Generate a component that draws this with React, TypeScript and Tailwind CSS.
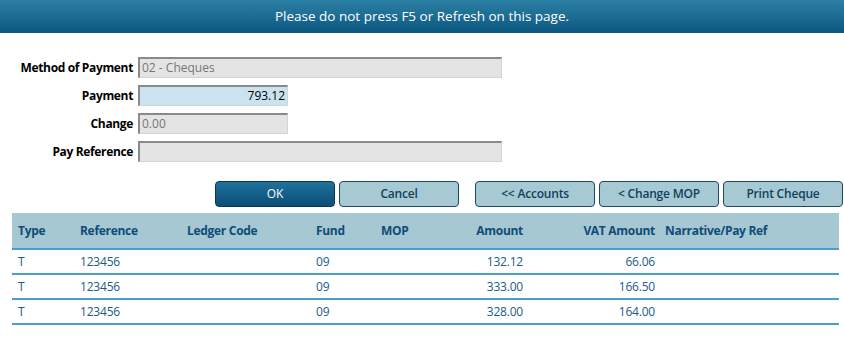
import React from 'react';

interface Line {
  type: string;
  reference: string;
  ledger: string;
  fund: string;
  mop: string;
  amount: string;
  vat: string;
  narrative: string;
}

const lines: Line[] = [
  { type: 'T', reference: '123456', ledger: '', fund: '09', mop: '', amount: '132.12', vat: '66.06', narrative: '' },
  { type: 'T', reference: '123456', ledger: '', fund: '09', mop: '', amount: '333.00', vat: '166.50', narrative: '' },
  { type: 'T', reference: '123456', ledger: '', fund: '09', mop: '', amount: '328.00', vat: '164.00', narrative: '' },
];

const cols = 'grid grid-cols-[62px_107px_129px_65px_65px_89px_132px_1fr]';

const FieldRow: React.FC<{ label: string; children: React.ReactNode }> = ({ label, children }) => (
  <div className="flex items-center h-[21px]">
    <div className="w-[138px] pr-[5px] text-right font-bold text-[12px] tracking-[-0.35px] text-black">{label}</div>
    {children}
  </div>
);

const inputBase =
  'h-[21px] border border-t-[2px] border-l-[2px] border-t-[#8a8a8a] border-l-[#8a8a8a] border-r-[#d4d4d4] border-b-[#d4d4d4] text-[12px] px-[2px] flex items-center';

const Button: React.FC<{ label: string; primary?: boolean }> = ({ label, primary }) => (
  <button
    className={
      primary
        ? 'w-[120px] h-[26px] rounded-[4px] border border-[#0c3550] bg-gradient-to-b from-[#1f719b] to-[#0b4e77] text-white text-[12px]'
        : 'w-[120px] h-[26px] rounded-[4px] border border-[#1d4a60] bg-[#a6c9d3] text-[#123f5c] text-[12px] font-semibold tracking-[-0.2px]'
    }
  >
    {label}
  </button>
);

export default function App() {
  return (
    <div className="w-[844px] h-[344px] bg-white overflow-hidden" style={{ fontFamily: '"Open Sans", "Noto Sans", sans-serif' }}>
      {/* Banner */}
      <div className="h-[33px] bg-gradient-to-b from-[#2c80a5] to-[#0a5780] flex items-center justify-center text-white text-[13.5px]">
        Please do not press F5 or Refresh on this page.
      </div>

      {/* Form */}
      <div className="pt-[24px] flex flex-col gap-[7px]">
        <FieldRow label="Method of Payment">
          <div className={`${inputBase} w-[364px] bg-[#e4e4e4] text-[#777]`}>02 - Cheques</div>
        </FieldRow>
        <FieldRow label="Payment">
          <div className={`${inputBase} w-[150px] bg-[#c9e4f0] text-black justify-end`}>793.12</div>
        </FieldRow>
        <FieldRow label="Change">
          <div className={`${inputBase} w-[150px] bg-[#e4e4e4] text-[#777]`}>0.00</div>
        </FieldRow>
        <FieldRow label="Pay Reference">
          <div className={`${inputBase} w-[364px] bg-[#e4e4e4]`} />
        </FieldRow>
      </div>

      {/* Buttons */}
      <div className="mt-[19px] flex pl-[215px] gap-[4px]">
        <Button label="OK" primary />
        <Button label="Cancel" />
        <div className="w-[8px]" />
        <Button label="<< Accounts" />
        <Button label="< Change MOP" />
        <Button label="Print Cheque" />
      </div>

      {/* Table */}
      <div className="mt-[6px] mx-[12px] w-[827px]">
        <div className={`${cols} h-[37px] items-center bg-[#a5c8d2] border-b-[2px] border-[#4a9fc9] text-[#0f4c78] font-bold text-[12px] tracking-[-0.3px]`}>
          <div className="pl-[6px]">Type</div>
          <div className="pl-[6px]">Reference</div>
          <div className="pl-[6px]">Ledger Code</div>
          <div className="pl-[6px]">Fund</div>
          <div className="pl-[6px]">MOP</div>
          <div className="pr-[6px] text-right">Amount</div>
          <div className="pr-[6px] text-right">VAT Amount</div>
          <div className="pl-[4px]">Narrative/Pay Ref</div>
        </div>
        {lines.map((l, i) => (
          <div key={i} className={`${cols} h-[25px] items-center border-b-[2px] border-[#4a9fc9] text-[#1b5b88] text-[12px] tracking-[-0.2px]`}>
            <div className="pl-[6px]">{l.type}</div>
            <div className="pl-[6px]">{l.reference}</div>
            <div className="pl-[6px]">{l.ledger}</div>
            <div className="pl-[6px]">{l.fund}</div>
            <div className="pl-[6px]">{l.mop}</div>
            <div className="pr-[6px] text-right">{l.amount}</div>
            <div className="pr-[6px] text-right">{l.vat}</div>
            <div className="pl-[4px]">{l.narrative}</div>
          </div>
        ))}
      </div>
    </div>
  );
}
